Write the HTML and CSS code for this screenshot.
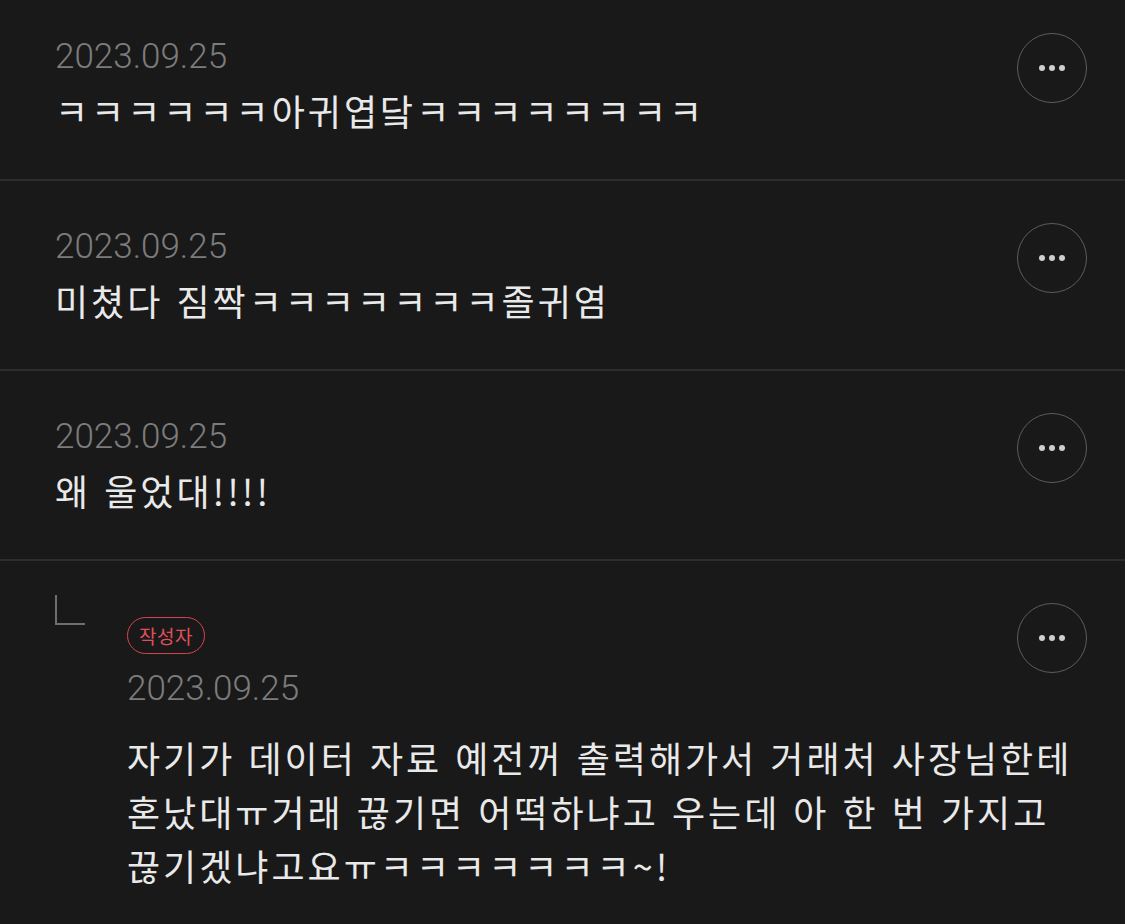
FILE: index.html
```html
<!DOCTYPE html>
<html lang="ko">
<head>
    <meta charset="UTF-8">
    <meta name="viewport" content="width=device-width, initial-scale=1.0">
    <title>댓글</title>
    <link rel="stylesheet" href="styles.css">
</head>
<body>
    <!-- Comment list -->
    <div class="comment-list">
        <div class="comment">
            <div class="comment-main">
                <div class="comment-head">
                    <div class="comment-meta">
                        <div class="comment-date">2023.09.25</div>
                    </div>
                    <button class="more-button" aria-label="더보기"><span></span><span></span><span></span></button>
                </div>
                <div class="comment-text">ㅋㅋㅋㅋㅋㅋ아귀엽닼ㅋㅋㅋㅋㅋㅋㅋㅋ</div>
            </div>
        </div>

        <div class="comment">
            <div class="comment-main">
                <div class="comment-head">
                    <div class="comment-meta">
                        <div class="comment-date">2023.09.25</div>
                    </div>
                    <button class="more-button" aria-label="더보기"><span></span><span></span><span></span></button>
                </div>
                <div class="comment-text">미쳤다 짐짝ㅋㅋㅋㅋㅋㅋㅋ졸귀염</div>
            </div>
        </div>

        <div class="comment">
            <div class="comment-main">
                <div class="comment-head">
                    <div class="comment-meta">
                        <div class="comment-date">2023.09.25</div>
                    </div>
                    <button class="more-button" aria-label="더보기"><span></span><span></span><span></span></button>
                </div>
                <div class="comment-text">왜 울었대!!!!</div>
            </div>
        </div>

        <!-- Reply from the author -->
        <div class="comment reply">
            <div class="reply-mark"></div>
            <div class="comment-main">
                <div class="comment-head">
                    <div class="comment-meta">
                        <span class="author-badge">작성자</span>
                        <div class="comment-date">2023.09.25</div>
                    </div>
                    <button class="more-button" aria-label="더보기"><span></span><span></span><span></span></button>
                </div>
                <div class="comment-text">자기가 데이터 자료 예전꺼 출력해가서 거래처 사장님한테<br>혼났대ㅠ거래 끊기면 어떡하냐고 우는데 아 한 번 가지고<br>끊기겠냐고요ㅠㅋㅋㅋㅋㅋㅋㅋ~!</div>
            </div>
        </div>
    </div>
</body>
</html>
```

FILE: styles.css
```css
/* Page */
body {
    margin: 0;
    padding: 0;
    background-color: #191919;
    font-family: "Noto Sans CJK KR", "Noto Sans", sans-serif;
    color: #e9e9e9;
    overflow: hidden;
}

/* List is scrolled a little, first row is cut at the top */
.comment-list {
    margin-top: -9px;
}

.comment {
    display: flex;
    align-items: flex-start;
    padding: 42px 38px 42px 55px;
    border-bottom: 2px solid #2d2d2d;
}

.comment-main {
    flex: 1;
    min-width: 0;
}

/* Date (and badge) on the left, round button on the right */
.comment-head {
    display: flex;
    justify-content: space-between;
    align-items: flex-start;
}

.comment-meta {
    display: flex;
    flex-direction: column;
    align-items: flex-start;
}

.comment-date {
    margin-top: 4px;
    font-family: Roboto, "Liberation Sans", sans-serif;
    font-size: 35px;
    font-weight: 300;
    line-height: 40px;
    color: #7c7c7c;
}

.comment-text {
    margin-top: 6px;
    font-size: 36px;
    line-height: 54px;
    letter-spacing: 3px;
    white-space: nowrap;
}

/* Round "more" button, it hangs past the date without pushing the text down */
.more-button {
    flex: none;
    width: 70px;
    height: 70px;
    margin-bottom: -40px;
    padding: 0;
    border: 1.5px solid #5c5c5c;
    border-radius: 50%;
    background: transparent;
    display: flex;
    align-items: center;
    justify-content: center;
    gap: 4px;
    cursor: pointer;
}

.more-button span {
    width: 6px;
    height: 6px;
    border-radius: 50%;
    background: #cfcfcf;
}

/* Reply */
.reply {
    border-bottom: none;
}

.reply-mark {
    flex: none;
    width: 30px;
    height: 30px;
    margin-top: -8px;
    margin-right: 42px;
    border-left: 2.5px solid #6e6e6e;
    border-bottom: 2.5px solid #6e6e6e;
    box-sizing: border-box;
}

.reply .comment-meta {
    padding-top: 14px;
}

.author-badge {
    display: block;
    height: 35px;
    padding: 0 11px;
    border: 1.5px solid #d8434e;
    border-radius: 20px;
    font-size: 19px;
    line-height: 35px;
    letter-spacing: 0.5px;
    color: #e0505a;
}

.reply .comment-date {
    margin-top: 15px;
}

.reply .comment-text {
    margin-top: 21px;
}
```
